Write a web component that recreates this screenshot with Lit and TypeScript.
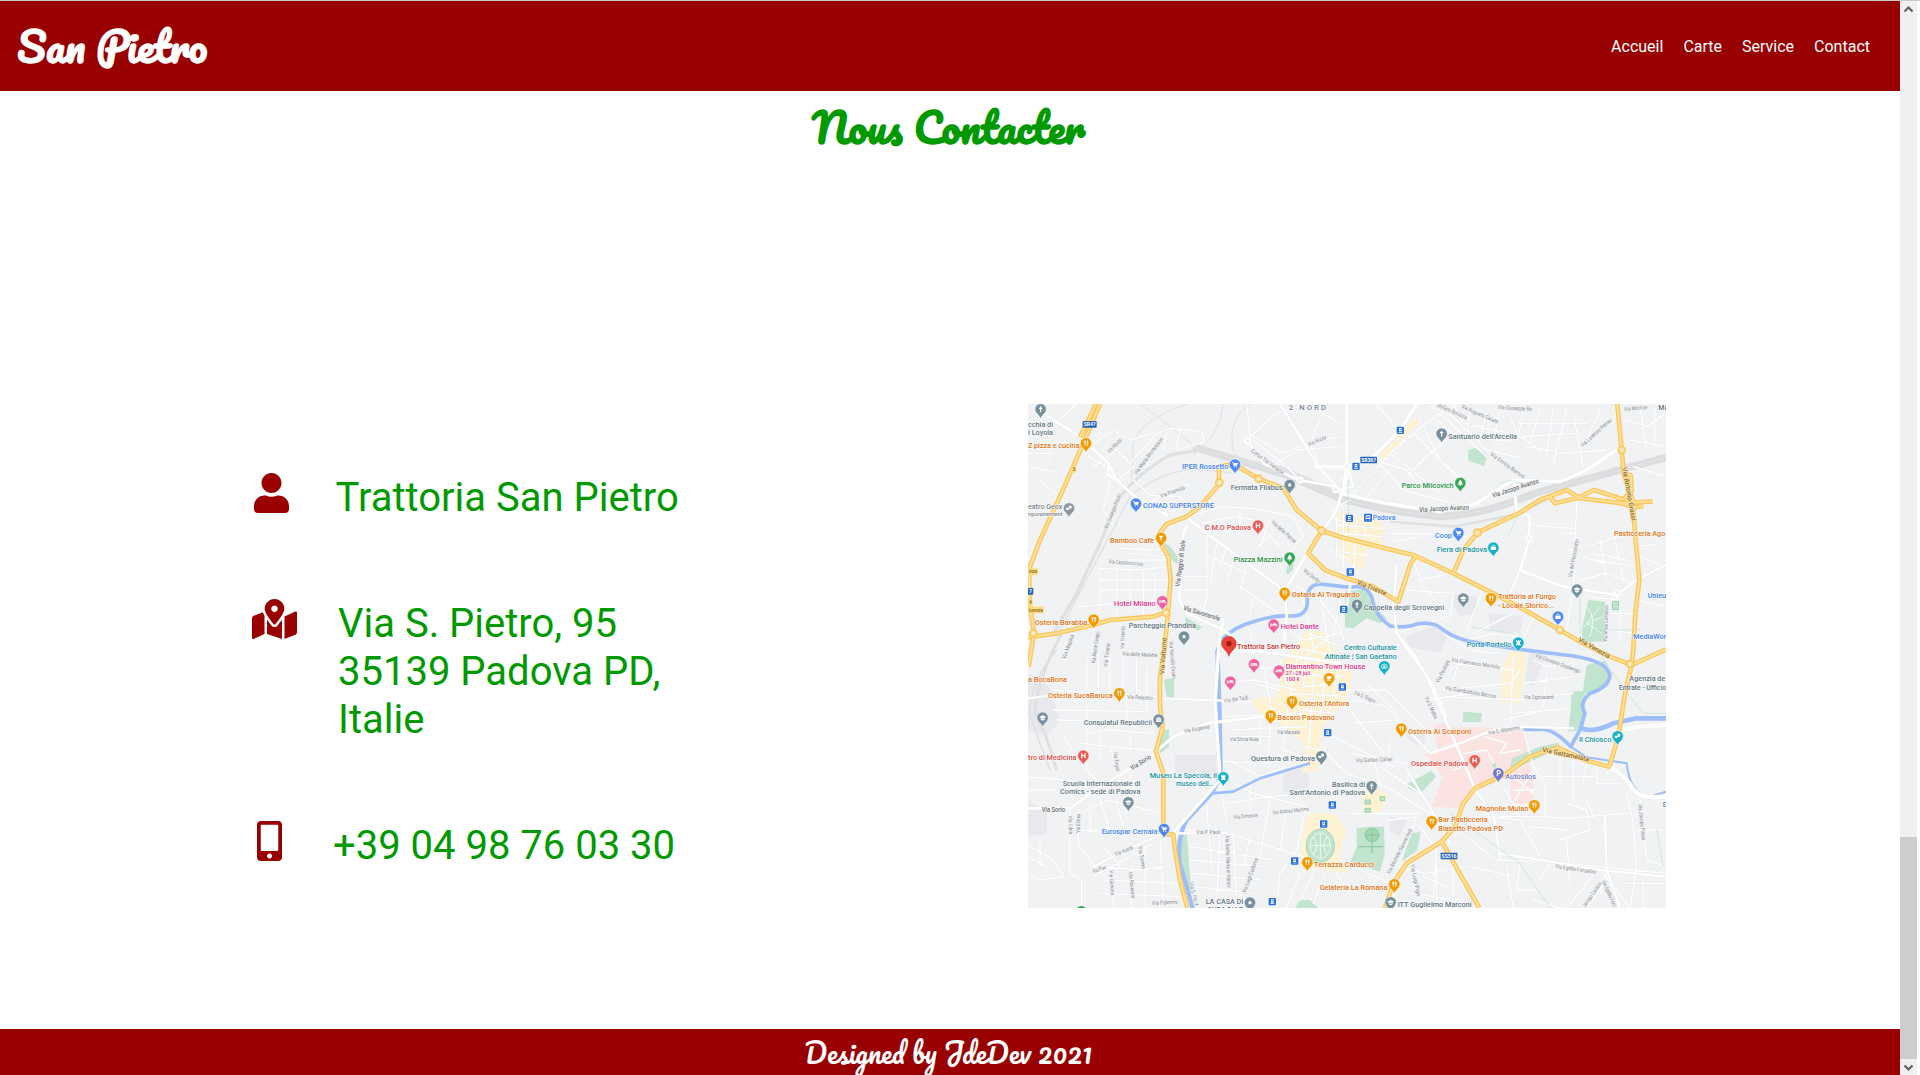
import { LitElement, html, svg, css } from "lit";
import { customElement } from "lit/decorators.js";

/* Map drawing units: three per CSS pixel. */

const ORANGE = "#f29900";
const SLATE = "#78909c";
const BLUE = "#4d86f5";
const PINK = "#f0609e";
const RED = "#ea5a54";
const GREEN = "#34a853";
const TEAL = "#15b0c6";

const ORANGE_T = "#dd7310";
const SLATE_T = "#5f7682";
const BLUE_T = "#3f7ff0";
const PINK_T = "#e0308c";
const RED_T = "#dc4a48";
const GREEN_T = "#25903f";
const TEAL_T = "#16929f";

const parks = [
  "M425,420 L450,440 L474,470 L472,492 L455,480 L440,445 Z",
  "M496,652 L545,680 L535,692 L498,672 Z",
  "M800,500 L822,490 L818,510 L800,525 Z",
  "M1345,150 L1372,142 L1402,165 L1392,198 L1345,182 Z",
  "M975,575 L1030,568 L1055,590 L1060,620 L1100,655 L1080,670 L1040,655 L1000,685 L975,682 Z",
  "M1705,600 L1755,605 L1752,725 L1690,725 L1685,690 Z",
  "M432,840 L462,832 L462,894 L440,890 Z",
  "M425,992 L447,988 L447,1040 L420,1060 L415,1040 Z",
  "M478,1300 L500,1300 L508,1400 L515,1500 L495,1450 Z",
  "M1700,795 L1755,782 L1768,812 L1765,858 L1712,880 L1688,880 Z",
  "M1655,875 L1695,872 L1690,990 L1645,995 L1652,930 Z",
  "M1330,935 L1386,940 L1382,966 L1328,966 Z",
  "M1475,1075 L1560,1040 L1615,1028 L1620,1042 L1500,1100 L1470,1120 Z",
  "M1412,1085 L1430,1090 L1425,1112 Z",
  "M1165,1150 L1235,1112 L1248,1130 L1200,1182 L1165,1165 Z",
  "M1010,1285 L1040,1280 L1092,1280 L1094,1360 L1080,1415 L992,1385 L1010,1340 Z",
  "M1175,1300 L1202,1296 L1192,1350 L1145,1385 Z",
  "M825,1524 L840,1500 L870,1500 L894,1524 Z",
];

const hospital = [
  "M1275,980 L1510,985 L1525,1072 L1435,1145 L1370,1165 L1318,1225 L1236,1220 L1268,1130 L1212,1060 L1255,1055 Z",
  "M1470,1120 L1530,1090 L1545,1210 L1475,1212 Z",
  "M1240,975 L1278,970 L1300,1030 L1255,1055 Z",
];

const sand = [
  "M950,330 L990,345 L1060,350 L1090,380 L1085,430 L1040,450 L1030,510 L960,470 Z",
  "M1080,160 L1130,120 L1145,130 L1090,180 Z",
  "M1125,110 L1190,50 L1200,65 L1140,125 Z",
  "M690,900 L735,890 L770,895 L790,780 L860,690 L920,700 L970,810 L1000,820 L980,900 L905,980 L895,1110 L845,1120 L850,1030 L765,960 L720,945 Z",
  "M1450,790 L1500,720 L1520,755 L1500,910 L1440,905 Z",
  "M850,1280 L870,1240 L940,1240 L980,1290 L955,1370 L985,1420 L840,1400 Z",
  "M1030,1175 L1060,1160 L1105,1185 L1080,1235 L1025,1245 Z",
];

const blocks = [
  "M1290,580 L1370,590 L1370,640 L1315,650 Z",
  "M1405,640 L1510,650 L1500,700 L1410,690 Z",
  "M1155,710 L1240,680 L1285,700 L1260,760 L1170,740 Z",
  "M1530,750 L1580,760 L1540,860 L1515,850 Z",
  "M465,1065 L590,1065 L590,1125 L465,1120 Z",
  "M24,1200 L80,1240 L80,1300 L24,1310 Z",
  "M1160,1000 L1220,990 L1210,1040 L1165,1020 Z",
  "M790,1120 L860,1100 L870,1160 L790,1180 Z",
  "M24,820 L90,860 L120,960 L80,1010 L24,990 Z",
  "M1110,1250 L1160,1260 L1140,1310 L1110,1295 Z",
];

const rails: [string, number][] = [
  ["M520,140 Q650,180 800,225 L960,295 Q1100,335 1260,350 Q1360,345 1450,315 L1560,275 L1938,172", 22],
  ["M620,170 L790,205 L960,280 L1250,338", 8],
  ["M100,700 L170,580 L240,430 L300,290 Q360,215 450,165 L540,150", 9],
  ["M120,690 L220,500 L330,290 Q400,225 520,205 L640,220", 4],
  ["M500,12 Q360,60 340,130 L335,240", 3],
  ["M360,12 Q440,70 540,150", 3],
  ["M610,12 L600,60 Q580,120 520,165", 3],
  ["M690,12 Q620,60 640,150 Q670,230 760,250", 3],
  ["M1110,365 L1300,380 L1480,345 L1580,300", 7],
  ["M130,690 Q50,840 45,940 Q80,1000 110,1110", 8],
  ["M110,750 Q34,840 28,940 L60,1030 L90,1110", 5],
];

const minor =
  "M24,160 H90 V180 M24,200 L100,215 M60,240 L130,300 M130,50 L170,12 M210,60 L240,100 M230,125 L280,90 L330,120 L400,100 " +
  "M205,170 L260,200 M220,200 L290,150 L330,190 L410,100 L455,85 L545,95 L555,125 L470,150 M440,100 L430,150 M480,90 L470,140 " +
  "M270,245 L250,330 L280,380 M300,235 L340,200 M350,330 L420,290 L500,255 M340,240 L390,285 L480,290 " +
  "M510,350 L600,320 L700,325 L820,350 L850,410 L800,470 M545,370 L640,350 L700,360 L780,440 M660,370 V330 M700,450 L760,400 M750,360 L720,440 " +
  "M240,505 L350,510 L445,500 M240,505 V640 M240,540 H440 M240,570 H445 M180,620 L445,600 M290,500 V650 M330,510 V640 M370,520 V640 M405,520 V640 " +
  "M300,445 L420,450 M340,460 L430,470 M320,480 H445 M560,405 V600 L545,640 M500,530 H560 M480,570 H555 M590,430 L570,560 " +
  "M570,470 L680,520 M620,440 L600,500 M640,480 L625,540 M680,500 L660,570 M500,600 L610,660 M660,560 L790,650 M700,590 L690,640 " +
  "M680,12 L690,110 M690,110 L770,40 L860,12 M700,110 L790,160 L860,130 L960,110 M770,190 L830,150 L960,140 M860,12 L960,70 M840,240 L810,210 L700,120 " +
  "M900,60 L870,130 L925,260 M930,330 L990,300 M890,400 L940,350 L990,380 M930,450 L990,480 " +
  "M960,240 L1060,180 L1160,210 L1200,260 M1000,280 L1110,160 L1260,280 M1110,160 L1180,100 L1330,250 M1180,100 L1260,40 L1400,170 " +
  "M1200,60 L1260,180 L1350,260 M1060,170 L1150,270 L1300,310 M1140,100 L1110,60 L1070,12 M1100,220 L1040,290 M1160,230 L1230,160 L1320,90 " +
  "M1230,20 L1300,50 L1400,150 L1510,175 M1300,12 L1330,70 L1470,100 M1350,30 L1345,90 M1400,40 L1380,110 M1440,20 L1420,130 M1250,60 L1310,110 L1480,125 " +
  "M1450,12 L1500,110 L1560,150 M1510,30 L1495,110 M1560,30 L1530,130 M1600,20 L1580,170 M1640,30 L1600,190 M1510,110 L1660,100 M1520,140 L1640,160 L1760,150 " +
  "M1500,70 H1700 M1660,40 L1690,200 M1740,30 L1700,120 M1820,60 L1880,80 L1938,40 M1830,120 L1938,140 M1860,20 L1880,150 M1905,30 V130 M1840,200 L1938,230 " +
  "M1100,400 H1200 L1340,410 M1110,425 L1200,412 M1520,370 L1580,380 L1660,385 M1670,305 L1665,430 L1660,560 L1640,690 M1625,400 H1665 V450 H1640 " +
  "M1700,440 L1830,400 M1720,480 L1850,500 M1740,420 L1760,540 M1780,400 L1810,540 M1680,540 L1760,520 L1840,550 M1750,490 L1690,470 M1720,460 L1820,480 " +
  "M1840,440 L1938,430 M1860,470 L1938,500 M1850,600 L1938,620 M1700,590 L1800,600 L1800,720 M1770,640 H1860 M1760,690 L1850,700 " +
  "M1200,540 L1290,520 M1180,480 L1210,560 L1280,640 M1160,570 L1300,580 L1290,660 M1390,570 L1340,690 M1480,640 L1360,700 M1540,650 L1500,740 M1130,700 L1280,650 " +
  "M830,560 L900,600 L960,680 L980,750 M790,680 L850,720 L960,700 M690,690 L700,750 M850,600 L880,740 M900,580 L930,760 M960,600 L940,700 L840,780 " +
  "M640,750 L900,780 L960,810 M680,810 L790,800 M700,850 L780,870 M780,780 L800,850 M860,770 L850,860 L970,850 M920,780 L900,960 M850,900 L990,920 M610,850 L700,840 L830,870 " +
  "M840,700 L830,780 L815,860 L800,950 M870,700 L960,740 M820,740 L950,770 M815,820 L980,830 M810,880 L980,890 M840,930 L950,940 M950,830 L930,930 M880,830 L870,1000 L855,1110 M850,1040 L900,1050 M855,1075 L895,1080 " +
  "M730,800 L760,950 M610,950 L850,940 M640,990 L720,985 L860,980 M630,1010 H760 M720,960 V1030 M750,960 L745,1090 M800,960 L790,1050 L860,1070 M610,1085 L720,1090 L880,1070 " +
  "M950,350 V470 M970,340 V500 M1010,345 L1000,560 M1040,350 L1030,440 M950,375 L1085,385 M950,400 L1085,410 M960,455 L1040,465 " +
  "M625,1080 L720,1130 L800,1100 M640,1150 L700,1180 L860,1220 M620,1210 L750,1190 L880,1180 M600,1160 L620,1260 M690,1130 V1250 M920,1060 L980,1120 L1100,1160 M940,1010 L1000,1040 L1120,1100 M990,930 L1090,1060 " +
  "M990,970 L1130,960 L1230,1060 M1000,900 L1100,920 L1230,1060 M1040,850 L1130,940 M960,870 L1100,870 L1220,990 M990,1060 L1160,1090 M1060,1070 L1080,1150 M1110,1020 L1100,1110 " +
  "M100,870 L240,880 L415,890 M110,900 L200,905 V1100 M100,930 L380,935 M110,960 L300,965 L410,970 M200,780 V900 M235,760 V880 M270,760 V880 M310,760 V880 M350,780 V880 M380,800 V930 M320,880 V960 " +
  "M210,1000 L260,990 L400,1000 M180,1030 L270,1040 L390,1050 M240,1000 V1080 M270,1040 L290,1110 M330,1000 V1060 M24,1130 L130,1140 L160,1200 M24,1170 H100 " +
  "M130,1010 L190,1100 L260,1170 M180,1240 L260,1200 L430,1240 M210,1210 V1300 M240,1200 L270,1290 M150,1230 V1420 L185,1440 V1524 M175,1240 V1330 L240,1420 M185,1290 L260,1295 M290,1210 L310,1280 " +
  "M30,1340 L100,1380 L130,1430 L60,1440 L24,1420 M24,1370 L80,1400 M60,1320 V1400 M220,1430 L400,1330 M240,1400 L360,1410 L440,1400 M250,1440 L470,1450 M240,1480 L480,1490 M280,1410 V1524 M335,1400 V1524 M375,1340 V1524 M420,1320 L430,1500 M260,1350 L300,1400 " +
  "M500,1290 L620,1300 L850,1370 M510,1340 L760,1380 M510,1380 L730,1400 M520,1420 L720,1440 M520,1460 L700,1480 M560,1220 L575,1400 M600,1300 L590,1500 M640,1300 L650,1500 M690,1310 L670,1400 " +
  "M750,1200 L720,1370 L650,1510 M860,1220 L830,1350 L780,1420 L770,1524 M800,1220 L780,1350 M840,1420 L800,1524 M880,1420 L840,1500 M910,1430 L880,1510 M950,1420 L1000,1500 M1000,1400 L1110,1450 L1130,1524 " +
  "M980,1240 L1200,1240 M1100,1160 L1230,1240 M1080,1100 L1200,1180 M1110,1260 L1190,1250 L1160,1330 M1200,1280 L1250,1350 L1240,1490 M1130,1400 L1220,1420 L1340,1400 M1210,1430 L1280,1460 M1250,1400 V1510 M1300,1350 V1500 M1180,1480 L1300,1500 " +
  "M1270,870 L1470,850 L1500,810 M1280,890 L1490,900 L1660,880 M1300,790 L1480,810 M1320,770 L1300,840 M1480,770 L1470,1000 M1510,850 L1660,830 M1540,780 L1580,800 L1660,790 M1450,960 L1580,930 M1580,830 L1570,920 " +
  "M1270,700 L1350,750 L1430,760 M1340,720 L1420,700 L1490,710 M1480,940 L1650,925 M1510,985 L1540,1100 L1575,1150 V1250 M1580,1060 L1700,1080 M1620,1060 V1160 M1570,1130 H1720 M1660,1080 V1200 M1700,1090 L1690,1150 " +
  "M1575,1250 L1640,1255 L1820,1240 M1440,1250 L1575,1250 M1450,1160 L1500,1250 M1400,1250 L1500,1260 L1560,1370 M1310,1290 L1430,1380 L1580,1385 L1740,1400 L1938,1420 M1530,1280 L1640,1290 M1640,1210 L1700,1230 L1710,1290 L1620,1320 " +
  "M1700,1200 L1720,1250 M1760,1120 L1830,1090 M1730,1090 V1150 H1800 M1820,1180 L1838,1260 L1850,1400 L1830,1524 M1860,1200 L1880,1380 L1938,1400 M1850,1290 H1938 M1750,1260 L1760,1410 L1740,1480 M1590,1390 L1560,1440 M1640,1320 L1650,1450 " +
  "M1500,1390 L1490,1470 L1540,1470 M1740,1400 L1640,1524 M1770,1420 L1700,1524 M1750,1420 L1830,1524 M1460,1400 L1480,1524 M1350,1400 L1480,1430 M1540,1500 L1620,1524 M1870,1440 V1524 M1820,1450 H1930";

const major: [string, number][] = [
  ["M70,40 L180,110 L265,190 L290,240 L345,290 L440,345 M265,190 V225 L300,245", 8],
  ["M500,352 L560,400 L790,570 M500,380 L490,400 L478,600 L500,640 L610,690 L700,755", 8],
  ["M795,570 L865,455 L905,395 L945,340 L980,240 V12 M795,580 L800,650 L790,750", 8],
  ["M610,660 L598,720 L588,860 L585,910 L598,1100 L600,1140 L460,1298", 9],
  ["M640,740 L690,750 L960,790", 8],
  ["M780,12 L895,200 L960,270 M980,195 L1000,260 L960,270 M680,120 L730,190 L835,240 L950,260", 7],
  ["M960,280 L1100,310 L1260,335 L1370,310 L1480,240 L1620,245 L1700,210 L1790,150 L1805,150", 10],
  ["M980,200 L1060,170 L1140,90 L1190,12 M980,190 L970,280 M890,200 L980,200", 11],
  ["M1480,240 L1490,330 L1530,350 L1525,430 L1500,510 L1630,560 L1790,585 L1850,540", 8],
  ["M1500,510 L1470,580 M1850,540 L1938,495 M1790,590 L1805,650", 6],
  ["M1130,500 L1120,610 L1130,700 L1220,830 L1320,1060 L1370,1180 M1000,500 L980,620", 7],
  ["M1130,700 L1180,760 L1240,860 L1280,950 M1220,900 L1360,880", 6],
  ["M1230,1060 L1320,1030 L1420,990 L1510,980 L1660,985", 7],
  ["M24,1225 L150,1225 L240,1160 L390,1070 L460,1010 L560,970 L730,950", 8],
  ["M24,895 L110,885 M415,895 L690,905", 6],
  ["M220,1400 L340,1340 L430,1300 L620,1300", 6],
  ["M1768,1100 Q1820,1130 1840,1170 Q1870,1200 1938,1190 M1800,990 L1860,980 L1938,975", 13],
  ["M1360,1165 L1420,1240 L1440,1370 M1160,1110 L1240,1240 L1290,1330", 6],
  ["M1438,1360 L1590,1385 L1740,1410 L1938,1430 M1755,1250 L1760,1410 L1800,1524", 7],
  ["M1395,1010 L1460,1030 L1440,1060 L1500,1050 M1330,1060 L1400,1050 L1420,1090 M1300,1110 L1360,1090 M1480,1130 L1540,1180 M1540,1110 L1485,1200 M1480,1170 H1545", 4],
];

const yellow = [
  "M240,12 L190,130 L120,290 L60,420 L28,505 V600 L42,700 L26,800",
  "M180,112 L205,60 L228,12",
  "M24,712 L110,700 L220,675 L270,660 L400,650 L440,636",
  "M500,350 L440,372 L418,400 L422,430 L445,470 L452,540 L444,640 L432,760 L420,830 V920 L428,980 L408,1055 L430,1120 V1300 L460,1304 L465,1350 L480,1440 L502,1524",
  "M500,350 L540,320 L598,252 L596,200 L640,192 L716,236 L790,265 L830,330 L905,392 L865,460 L915,510 L980,535 L1060,560 L1135,605 L1172,490 L1186,470",
  "M905,392 L960,410 L1095,445 L1180,465 L1300,520 L1420,580 L1510,628 L1620,690 L1680,725 L1770,770 L1835,795",
  "M1300,520 L1330,450 L1372,398 L1500,338 L1560,300 L1640,270 L1675,292 L1722,270 L1810,298 L1835,272 L1832,225 L1812,225",
  "M1590,290 L1605,310 L1672,294 L1810,310 L1898,304 M1800,310 L1845,322 L1870,318",
  "M1792,12 L1805,150 L1812,225 L1838,300 L1845,400 L1858,540 L1846,640 L1840,750 L1835,795 L1815,880 L1795,1010 L1768,1100 L1700,1082 L1612,1042 L1530,1070 L1460,1120 L1365,1165 L1330,1210 L1305,1280 L1265,1325 L1160,1390 L1120,1450 L1095,1524",
  "M1265,1325 L1378,1524",
  "M1835,795 L1938,748",
];

const rivers: [string, number][] = [
  ["M592,750 L606,720 Q640,680 700,665 Q760,645 810,648 Q865,650 862,600 Q860,555 900,552 L990,562 Q1050,550 1060,610 Q1070,650 1110,678 Q1160,685 1190,672 Q1240,662 1270,690 Q1310,720 1380,730 L1500,748 L1660,768 Q1768,785 1770,830 Q1760,865 1710,880 Q1675,910 1695,940 L1680,990 L1652,1040 Q1600,985 1560,988 H1510", 11],
  ["M592,750 L598,910 L602,1130 L575,1180 L500,1260 Q470,1310 480,1390 L518,1524", 13],
  ["M575,1180 L640,1175 L720,1135 L820,1105 L870,1090", 8],
  ["M1685,985 Q1720,1000 1780,970 L1850,955 L1938,955", 14],
  ["M1652,1040 L1700,1072 L1820,1090 Q1830,1185 1890,1190 L1938,1175", 6],
];

const dashed =
  "M1500,335 L1465,405 M1680,590 V700 M1720,690 H1860 M1745,770 L1800,850 L1870,940 L1938,940 M1500,1390 L1590,1524 M1290,1240 L1500,1390 M985,240 V400 M1910,1290 L1930,1400 M1355,680 L1400,690 L1480,700 M1440,250 Q1480,230 1520,260";

type Pin = [number, number, string, string];
const pins: Pin[] = [
  [62, 28, SLATE, "cross"], [198, 130, ORANGE, "fork"], [645, 194, BLUE, "cart"], [809, 255, SLATE, "dot"],
  [348, 311, BLUE, "cart"], [147, 325, "#8f979e", "mask"], [423, 414, ORANGE, "glass"], [714, 377, RED, "h"],
  [809, 473, GREEN, "tree"], [794, 579, ORANGE, "fork"], [427, 604, PINK, "bed"], [221, 659, ORANGE, "fork"],
  [492, 710, SLATE, "dot"], [761, 674, PINK, "bed"],
  [1265, 101, SLATE, "cross"], [1321, 249, GREEN, "tree"], [1315, 399, BLUE, "cart"], [1420, 443, TEAL, "bag"],
  [1330, 596, SLATE, "cap"], [1413, 595, ORANGE, "fork"], [1671, 569, SLATE, "cap"], [1614, 650, BLUE, "bag"],
  [1011, 615, SLATE, "cross"], [1495, 728, TEAL, "tower"],
  [702, 793, PINK, "bed"], [631, 845, PINK, "bed"], [777, 812, PINK, "bed"], [927, 835, ORANGE, "cup"],
  [298, 880, ORANGE, "fork"], [816, 904, ORANGE, "fork"], [752, 947, ORANGE, "fork"], [68, 953, SLATE, "cap"],
  [416, 959, SLATE, "case"], [190, 1067, RED, "h"], [904, 1069, SLATE, "mask"], [610, 1132, TEAL, "tower"],
  [325, 1207, SLATE, "cap"], [432, 1287, BLUE, "cart"], [862, 1387, ORANGE, "fork"], [690, 1508, SLATE, "dot"],
  [1093, 799, TEAL, "camera"], [1144, 986, ORANGE, "fork"], [1364, 1081, RED, "h"], [1435, 1120, "#7278d0", "p"],
  [1793, 1009, TEAL, "mask"], [1055, 1159, SLATE, "cross"], [1543, 1216, ORANGE, "fork"], [1235, 1264, ORANGE, "fork"],
  [1123, 1453, ORANGE, "fork"], [1112, 1507, SLATE, "cap"], [184, 1534, GREEN, "dot"],
];

/* x, baseline, width, colour, text, size */
type Label = [number, number, number, string, string, number?];
const labels: Label[] = [
  [24, 80, 75, SLATE_T, "cchia di"], [24, 105, 75, SLATE_T, "i Loyola"], [24, 144, 154, ORANGE_T, "Z pizza e cucina"],
  [486, 207, 139, BLUE_T, "IPER Rossetto"], [632, 270, 156, SLATE_T, "Fermata Flixbus"],
  [24, 328, 103, "#7c868c", "eatro Geox"], [24, 347, 103, "#7c868c", "nporairement", 18], [369, 325, 213, BLUE_T, "CONAD SUPERSTORE"],
  [554, 391, 139, RED_T, "C.M.O Padova"], [270, 429, 132, ORANGE_T, "Bamboo Cafè"], [641, 487, 146, GREEN_T, "Piazza Mazzini"],
  [815, 592, 204, ORANGE_T, "Ostaria Al Traguardo"], [282, 619, 125, PINK_T, "Hotel Milano"], [44, 674, 158, ORANGE_T, "Osteria Barabba"],
  [326, 685, 202, SLATE_T, "Parcheggio Prandina"], [782, 686, 115, PINK_T, "Hotel Dante"], [651, 746, 189, "#c5352f", "Trattoria San Pietro"],
  [1285, 116, 206, SLATE_T, "Santuario dell'Arcella"], [1145, 264, 156, GREEN_T, "Parco Milcovich"], [1058, 361, 68, BLUE_T, "Padova"],
  [1244, 413, 52, BLUE_T, "Coop"], [1250, 457, 151, TEAL_T, "Fiera di Padova"], [1782, 409, 154, ORANGE_T, "Pasticceria Ago"],
  [1434, 598, 174, ORANGE_T, "Trattoria al Fungo"], [1434, 623, 168, ORANGE_T, "- Locale Storico..."], [1883, 595, 55, BLUE_T, "Unieu"],
  [1031, 630, 241, SLATE_T, "Cappella degli Scrovegni"], [1840, 718, 98, BLUE_T, "MediaWor"], [1340, 741, 134, TEAL_T, "Porta Portello"],
  [972, 751, 158, TEAL_T, "Centro Culturale"], [914, 776, 216, TEAL_T, "Altinate | San Gaetano"], [1915, 30, 30, SLATE_T, "Ma"],
  [797, 807, 239, PINK_T, "Diamantino Town House"], [797, 826, 78, PINK_T, "27–28 juil.", 18], [797, 844, 42, PINK_T, "100 €", 17],
  [24, 845, 117, ORANGE_T, "a BocaBona"], [84, 894, 194, ORANGE_T, "Osteria SucaBaruca"], [191, 974, 205, SLATE_T, "Consulatul Republicii"],
  [837, 918, 151, ORANGE_T, "Osteria l'Anfora"], [772, 961, 172, ORANGE_T, "Bacaro Padovano"], [24, 1081, 145, RED_T, "tro di Medicina"],
  [693, 1083, 192, SLATE_T, "Questura di Padova"], [389, 1134, 202, TEAL_T, "Museo La Specola, il"], [468, 1159, 112, TEAL_T, "museo dell…"],
  [128, 1158, 233, SLATE_T, "Scuola Internazionale di"], [120, 1183, 241, SLATE_T, "Comics - sede di Padova"],
  [936, 1161, 99, SLATE_T, "Basilica di"], [808, 1186, 227, SLATE_T, "Sant'Antonio di Padova"], [245, 1303, 167, BLUE_T, "Eurospar Cernaia"],
  [882, 1402, 180, ORANGE_T, "Terrazza Carducci"], [899, 1469, 203, ORANGE_T, "Gelateria La Romana"], [557, 1512, 113, SLATE_T, "LA CASA DI"], [562, 1535, 106, SLATE_T, "CURA DIAZ"],
  [1164, 1001, 189, ORANGE_T, "Osteria Ai Scarponi"], [1828, 844, 108, SLATE_T, "Agenzia de"], [1797, 869, 141, SLATE_T, "Entrate - Ufficio"],
  [1677, 1025, 97, TEAL_T, "Il Chiosco"], [1173, 1097, 172, RED_T, "Ospedale Padova"], [1456, 1137, 92, "#7278cb", "Autosilos"],
  [1367, 1232, 158, ORANGE_T, "Magnolie Mulan"], [1255, 1267, 148, ORANGE_T, "Bar Pasticceria"], [1255, 1292, 194, ORANGE_T, "Biasetto Padova PD"],
  [1133, 1522, 222, SLATE_T, "ITT Guglielmo Marconi"], [1929, 1220, 9, SLATE_T, "E"],
];

/* centre x, centre y, angle, width, text, bold */
type Street = [number, number, number, number, string, boolean?];
const streets: Street[] = [
  [283, 137, -45, 55, "Via Monta"], [385, 168, -53, 135, "Via Maria Montessori"], [457, 275, -20, 78, "Via Pramida"],
  [278, 332, -68, 112, "Via Giuseppe Paolin"], [743, 185, 36, 118, "Corso Tre Venezie"], [891, 122, -23, 58, "Via Nizza"],
  [318, 488, 5, 104, "Via Castelmorrone"], [482, 490, -83, 140, "Via Raggio di Sole", true], [792, 395, 42, 95, "Via delle Palme"],
  [876, 528, 38, 62, "Via Giotto"], [545, 640, 17, 114, "Via Savonarola", true], [144, 740, -70, 76, "Via Mapina"],
  [226, 742, -82, 96, "Via Monte Cengio"], [260, 765, -83, 72, "Via Tirana"], [307, 712, -88, 68, "Via Vicenza"],
  [359, 763, 3, 106, "Via delle Melette"], [430, 768, -86, 110, "Via Volturno", true], [458, 780, 85, 112, "Via Niccolò Orsini"],
  [1296, 33, 24, 96, "Stefano Bonazza"], [1380, 42, 24, 120, "Via Augusto Caratti"], [1485, 24, 3, 102, "Via Giuseppe Ba"],
  [1463, 196, 36, 125, "Via Enrico Bernini"], [1728, 98, -42, 120, "Via Lorenzo Perosi"], [1847, 24, -5, 70, "Via Mortise"],
  [1486, 265, -18, 145, "Via Jacopo Avanzo", true], [1272, 326, -3, 150, "Via Jacopo Avanzo", true], [1827, 282, 80, 162, "Via Antonio Grassi", true],
  [1660, 475, -80, 116, "Via del Pescarotto"], [1055, 564, 22, 94, "Via Trieste", true], [1722, 744, 30, 106, "Via Venezia", true],
  [1757, 670, -88, 110, "Via Attilia Lambroni"], [360, 892, 3, 78, "Via Palestro"], [648, 897, -8, 74, "Via dei Tadi"],
  [530, 986, -10, 78, "Via Euganea"], [673, 1017, 0, 86, "Via Silvca Rosa"], [805, 996, 0, 68, "Via Marsala"],
  [290, 1085, 82, 58, "Via Tirgoli"], [362, 1088, -32, 68, "Via Sorio", true], [100, 1231, 0, 70, "Via Sorio", true],
  [152, 1275, 88, 56, "Via Libia"], [174, 1270, -88, 58, "Via Eritrea"], [677, 1248, -5, 72, "Via Dimesse"],
  [812, 1232, -6, 110, "Via Andrea Memmo"], [565, 1296, 0, 72, "Via P. Paoli"], [311, 1352, -22, 58, "Via Aosta"],
  [238, 1407, -20, 42, "Via Pisa"], [366, 1373, 80, 68, "Via Torino"], [276, 1448, 86, 74, "Via Genova"],
  [336, 1455, 84, 80, "Via Ravenna"], [435, 1507, -3, 78, "Via Palermo"], [625, 1385, 88, 156, "Via Santa Maria in Vanzo"],
  [690, 1426, -70, 112, "Via Luigi Cadorna"], [522, 1482, 76, 72, "Via S. Pio X"], [1367, 790, 9, 146, "Via Francesco Marzolo"],
  [1352, 876, 10, 156, "Via Giambattista Belzoni"], [1557, 890, 0, 90, "Via Ognissanti"], [1614, 790, 20, 142, "Via Giovanni Gradenigo"],
  [1268, 814, -62, 74, "Via Paolotti"], [1234, 923, 65, 70, "Via S. Mattia"], [1035, 890, 24, 68, "Via S. Biagio"],
  [1062, 1079, -2, 110, "Via Galileo Galilei"], [1452, 990, -10, 96, "Via S. Massimo"], [1637, 1064, 12, 142, "Via Gattamelata", true],
  [1138, 1354, -63, 150, "Via Michele Sanmicheli"], [1187, 1440, 78, 96, "Via Luigi Piga"], [1866, 1266, 84, 108, "Via Jacopo Filiasi"],
  [1667, 1407, 9, 124, "Via Egidio Forcellini"], [1716, 1483, -55, 88, "Jacopo Cavacio"], [1768, 1480, 66, 86, "Via Egidio Forc"],
];

const transit: [number, number][] = [
  [988, 355], [991, 516], [971, 628], [1141, 91], [1008, 199], [967, 861], [923, 998], [937, 1215], [911, 1272], [824, 1383], [757, 1505],
];

const shields: [number, number, number, string][] = [[209, 73, 42, "SR47"], [1046, 180, 50, "SR307"], [1287, 1368, 50, "SS516"], [31, 574, 18, "7"]];
const tags: [number, number, number, string][] = [[162, 207, 14, "3"], [39, 515, 30, "nza"], [47, 630, 46, "icenza"], [31, 608, 14, "4"]];

const glyph = (kind: string) => {
  switch (kind) {
    case "fork":
      return svg`<path class="line" d="M-5,-8 V-3 Q-5,0 -3,0 Q-1,0 -1,-3 V-8 M-3,-8 V8 M4,8 V-8 Q7,-5 6,1 H4"/>`;
    case "cart":
      return svg`<path class="line" d="M-9,-7 H-6 L-3,3 H5 L8,-4 H-5"/><path class="dot" d="M-5,-4 H8 L5,3 H-3Z"/><circle class="dot" cx="-2" cy="7" r="1.8"/><circle class="dot" cx="5" cy="7" r="1.8"/>`;
    case "bed":
      return svg`<path class="line" d="M-9,-5 V6 M9,6 V0 M-9,3 H9"/><path class="dot" d="M-2,-4 H6 Q9,-4 9,1 H-2Z"/><circle class="dot" cx="-5" cy="-1" r="2"/>`;
    case "cross":
      return svg`<path class="line thick" d="M0,-9 V9 M-5,-3 H5"/>`;
    case "h":
      return svg`<path class="line thick" d="M-5,-8 V8 M5,-8 V8 M-5,0 H5"/>`;
    case "p":
      return svg`<path class="line thick" d="M-3,9 V-8 H1 Q6,-7 6,-3.5 Q6,1 1,1 H-3"/>`;
    case "tree":
      return svg`<path class="dot" d="M0,-10 L6,-2 H4 L8,5 H-8 L-4,-2 H-6Z M-1.5,5 H1.5 V9 H-1.5Z"/>`;
    case "glass":
      return svg`<path class="dot" d="M-7,-7 H7 L1.5,0 V5 H5 V7 H-5 V5 H-1.5 V0Z"/>`;
    case "cap":
      return svg`<path class="dot" d="M0,-7 L11,-2 L0,3 L-11,-2Z M-6,2 L0,5 L6,2 V6 L0,9 L-6,6Z"/>`;
    case "cup":
      return svg`<path class="dot" d="M-7,-6 H8 V0 H5 Q4,4 1,4 H-3 Q-7,4 -7,0Z M-7,6 H6 V8 H-7Z"/>`;
    case "bag":
      return svg`<path class="dot" d="M-8,-3 H8 V7 H-8Z"/><path class="line" d="M-4,-3 Q-4,-8 0,-8 Q4,-8 4,-3"/>`;
    case "case":
      return svg`<path class="dot" d="M-8,-4 H8 V0 H-8Z M-8,2 H8 V7 H-8Z"/><path class="line" d="M-3,-4 V-7 H3 V-4"/>`;
    case "camera":
      return svg`<path class="line" d="M-8,-4 H-4 L-2,-7 H2 L4,-4 H8 V6 H-8Z"/><circle class="dot" cy="1" r="3.5"/>`;
    case "tower":
      return svg`<path class="dot" d="M-7,-8 H-4 V-5 H-1.5 V-8 H1.5 V-5 H4 V-8 H7 V-2 H5 V4 H7 V8 H-7 V4 H-5 V-2 H-7Z"/>`;
    case "mask":
      return svg`<path class="dot" d="M-9,-2 H0 V3 Q-4,9 -9,3Z M-1,-8 H8 V-2 Q4,4 1,1 V-4 H-1Z"/>`;
    default:
      return svg`<circle class="dot" r="5"/>`;
  }
};

@customElement("city-map")
class CityMap extends LitElement {
  static styles = css`
    :host { display: block; }
    .map { display: block; width: 638px; height: 504px; font-family: Roboto, sans-serif; }
    .ground { fill: #f0f2f4; }
    .park { fill: #c0e4cd; }
    .hospital { fill: #fbe3e2; }
    .sand { fill: #fdf3d3; }
    .block { fill: #e7e9ec; }
    .rail { fill: none; stroke: #dcdddf; stroke-linejoin: round; }
    .railline { fill: none; stroke: #e9eaec; stroke-width: 1.5; }
    .road { fill: none; stroke: #fff; stroke-linejoin: round; stroke-linecap: round; }
    .casing { fill: none; stroke: #e5e7ea; stroke-linejoin: round; }
    .river { fill: none; stroke: #9dbef9; stroke-linejoin: round; }
    .artery { fill: none; stroke: #fac758; stroke-width: 14; stroke-linejoin: round; }
    .core { fill: none; stroke: #ffe09a; stroke-width: 6; stroke-linejoin: round; }
    .trail { fill: none; stroke: #a5d9b5; stroke-width: 2; stroke-dasharray: 5 3; }
    .line { fill: none; stroke: #fff; stroke-width: 2.2; stroke-linejoin: round; }
    .thick { stroke-width: 3.4; }
    .dot { fill: #fff; }
    .label { font-weight: 500; stroke: #fff; stroke-width: 3.5; stroke-opacity: 0.8; paint-order: stroke; stroke-linejoin: round; }
    .district { font-size: 23px; font-weight: 500; fill: #74809a; stroke: #fff; stroke-width: 3; paint-order: stroke; }
    .street { font-size: 17px; fill: #85898d; text-anchor: middle; stroke: #f6f7f8; stroke-width: 3; paint-order: stroke; }
    .bold { font-size: 20px; fill: #6b6e70; font-weight: 500; }
    .amber { fill: #85662a; stroke: #ffe6ac; }
    .shieldtext { font-size: 15px; font-weight: 700; fill: #fff; text-anchor: middle; }
    .tagtext { font-size: 15px; font-weight: 500; fill: #8a6a18; text-anchor: middle; }
  `;

  render() {
    const amber = ["Via Trieste", "Via Venezia", "Via Volturno", "Via Antonio Grassi", "Via Gattamelata"];
    return html`<svg class="map" viewBox="24 12 1914 1512" preserveAspectRatio="none">
      <rect class="ground" x="24" y="12" width="1914" height="1512" />
      ${blocks.map((d) => svg`<path class="block" d=${d}/>`)}
      ${sand.map((d) => svg`<path class="sand" d=${d}/>`)}
      ${hospital.map((d) => svg`<path class="hospital" d=${d}/>`)}
      ${parks.map((d) => svg`<path class="park" d=${d}/>`)}
      ${rails.map(([d, w]) => svg`<path class="rail" d=${d} stroke-width=${w}/><path class="railline" d=${d}/>`)}
      <path class="casing" stroke-width="5.5" d=${minor} />
      <path class="road" stroke-width="4" d=${minor} />
      ${rivers.map(([d, w]) => svg`<path class="river" d=${d} stroke-width=${w}/>`)}
      ${major.map(([d, w]) => svg`<path class="casing" d=${d} stroke-width=${w + 2}/>`)}
      ${major.map(([d, w]) => svg`<path class="road" d=${d} stroke-width=${w}/>`)}
      <path class="trail" d=${dashed} />
      <ellipse cx="901" cy="1337" rx="42" ry="50" fill="#c0e4cd" stroke="#a6d4b4" stroke-width="3" />
      <ellipse cx="901" cy="1337" rx="30" ry="38" fill="none" stroke="#eef8f0" stroke-width="3" />
      <path class="line" d="M901,1300 V1375 M872,1337 H930 M880,1310 Q901,1337 880,1364 M922,1310 Q901,1337 922,1364" />
      <circle cx="1056" cy="1305" r="20" fill="#a3d6b4" stroke="#8fcca3" stroke-width="4" />
      <path d="M1056,1285 V1360 M1036,1305 H1080 M1015,1340 H1090" fill="none" stroke="#8fcca3" stroke-width="4" />
      <path class="line" d="M1700,620 Q1730,650 1710,710 M1740,620 L1700,670 L1745,700 M1690,680 Q1720,660 1750,650" />
      <path d="M1035,1200 h16 v12 h-16z M1080,1190 h14 v12 h-14z M1035,1225 h16 v12 h-16z M1778,605 h18 v24 h-18z" fill="#c0e4cd" stroke="#93d0a6" stroke-width="3" />
      ${yellow.map((d) => svg`<path class="artery" d=${d}/>`)}
      ${yellow.map((d) => svg`<path class="core" d=${d}/>`)}
      ${[[598, 248], [716, 236], [905, 392], [438, 638], [1805, 150], [1372, 398], [1620, 690], [40, 700], [1830, 792]].map(
        ([x, y]) => svg`<circle cx=${x} cy=${y} r="11" fill="#ffe09a" stroke="#fac355" stroke-width="4"/><circle class="dot" cx=${x} cy=${y} r="3"/>`
      )}
      ${[[980, 200], [683, 122], [840, 240], [947, 269], [1527, 415], [1793, 578]].map(
        ([x, y]) => svg`<circle cx=${x} cy=${y} r="8" fill="#eceef0" stroke="#fff" stroke-width="5"/>`
      )}
      ${streets.map(
        ([x, y, a, w, t, b]) => svg`<text class="street ${b ? "bold" : ""} ${amber.includes(t) ? "amber" : ""}"
          transform="translate(${x} ${y}) rotate(${a})" dy="6" textLength=${w} lengthAdjust="spacingAndGlyphs">${t}</text>`
      )}
      ${tags.map(([x, y, w, t]) => svg`<rect x=${x - w / 2} y=${y - 10} width=${w} height="20" fill="#fdda7b"/><text class="tagtext" x=${x} y=${y + 5}>${t}</text>`)}
      ${shields.map(([x, y, w, t]) => svg`<rect x=${x - w / 2} y=${y - 10} width=${w} height="20" rx="2" fill="#2664b4"/><text class="shieldtext" x=${x} y=${y + 6}>${t}</text>`)}
      ${transit.map(
        ([x, y]) => svg`<g transform="translate(${x} ${y})"><rect x="-11" y="-11" width="22" height="22" rx="3" fill="#2a6fe0"/><path class="dot" d="M-4,-7 H4 V3 H-4Z M-6,5 H6 V7 H-6Z"/><path d="M-2,-4 H2 V-1 H-2Z" fill="#2a6fe0"/></g>`
      )}
      <g transform="translate(1044 353)"><rect x="-12" y="-12" width="24" height="24" rx="3" fill="#2a6fe0" /><path class="dot" d="M-7,-7 H7 V4 H-7Z M-7,6 H-3 V8 H-7Z M3,6 H7 V8 H3Z" /><path d="M-5,-4 H5 V0 H-5Z" fill="#2a6fe0" /></g>
      ${pins.map(
        ([x, y, c, k]) => svg`<g transform="translate(${x} ${y})">
          <path d="M0,28 C-3,17 -17,12 -17,0 A17,17 0 0 1 17,0 C17,12 3,17 0,28Z" fill=${c} stroke="#fff" stroke-width="1.5"/>${glyph(k)}</g>`
      )}
      <path d="M627,769 C623,752 605,747 605,731 A22,22 0 0 1 649,731 C649,747 631,752 627,769Z" fill="#ea4335" stroke="#c5332a" stroke-width="1.5" />
      <circle cx="627" cy="731" r="8" fill="#9e1b16" />
      <text class="district" x="806" y="31" textLength="112" lengthAdjust="spacing">2 NORD</text>
      ${labels.map(
        ([x, y, w, c, t, s]) => svg`<text class="label" x=${x} y=${y} font-size=${s ?? 24} fill=${c} textLength=${w} lengthAdjust="spacingAndGlyphs">${t}</text>`
      )}
    </svg>`;
  }
}

const icons = {
  user: {
    box: "0 0 448 512",
    d: "M224 256c70.7 0 128-57.3 128-128S294.7 0 224 0 96 57.3 96 128s57.3 128 128 128zm89.6 32h-16.7c-22.2 10.2-46.9 16-72.9 16s-50.6-5.8-72.9-16h-16.7C60.2 288 0 348.2 0 422.4V464c0 26.5 21.5 48 48 48h352c26.5 0 48-21.5 48-48v-41.6c0-74.2-60.2-134.4-134.4-134.4z",
  },
  map: {
    box: "0 0 576 512",
    d: "M288 0c-69.59 0-126 56.41-126 126 0 56.26 82.35 158.8 113.9 196.02 6.39 7.54 17.82 7.54 24.2 0C331.65 284.8 414 182.26 414 126 414 56.41 357.59 0 288 0zm0 168c-23.2 0-42-18.8-42-42s18.8-42 42-42 42 18.8 42 42-18.8 42-42 42zM20.12 215.95A32.006 32.006 0 0 0 0 245.66v250.32c0 11.32 11.43 19.06 21.94 14.86L160 448V214.92c-8.84-15.98-16.07-31.54-21.25-46.42L20.12 215.95zM288 359.67c-14.07 0-27.38-6.18-36.51-16.96-19.66-23.2-40.57-49.62-59.49-76.72v182l192 64V266c-18.92 27.09-39.82 53.52-59.49 76.72-9.13 10.77-22.44 16.95-36.51 16.95zm266.06-198.51L416 224v288l139.88-55.95A31.996 31.996 0 0 0 576 426.34V176.02c0-11.32-11.43-19.06-21.94-14.86z",
  },
  phone: {
    box: "0 0 320 512",
    d: "M272 0H48C21.5 0 0 21.5 0 48v416c0 26.5 21.5 48 48 48h224c26.5 0 48-21.5 48-48V48c0-26.5-21.5-48-48-48zM160 480c-17.7 0-32-14.3-32-32s14.3-32 32-32 32 14.3 32 32-14.3 32-32 32zm112-108c0 6.6-5.4 12-12 12H60c-6.6 0-12-5.4-12-12V60c0-6.6 5.4-12 12-12h200c6.6 0 12 5.4 12 12v312z",
  },
};

const icon = (i: { box: string; d: string }) => html`<svg class="icon" viewBox=${i.box}><path d=${i.d} /></svg>`;

@customElement("app-root")
class AppRoot extends LitElement {
  static styles = css`
    :host { display: block; font-family: Roboto, sans-serif; }
    .window { display: flex; height: 1075px; width: 1920px; box-sizing: border-box; padding-right: 3px; border-top: 1px solid #c8c8c8; background: #fff; overflow: hidden; }
    .page { display: flex; flex-direction: column; width: 1900px; height: 1074px; }
    .header { display: flex; flex: none; justify-content: space-between; align-items: center; height: 90px; box-sizing: border-box; padding: 0 30px 0 17px; background: #900; color: #fff; }
    .script { margin: 0; font-family: Pacifico, cursive; font-size: 41.4px; line-height: 70px; font-weight: 700; }
    .brand { padding-bottom: 1px; }
    .nav { display: flex; gap: 20px; padding-top: 2px; font-size: 16px; line-height: 20px; }
    .heading { flex: none; height: 70px; padding: 1px 3px 0 0; box-sizing: border-box; text-align: center; color: #090; }
    .main { display: flex; flex: 1; align-items: flex-start; }
    .contacts { display: flex; flex-direction: column; gap: 78px; width: 776px; padding: 312px 0 0 252px; }
    .row { display: grid; grid-template-columns: 45px 1fr; height: 48px; font-size: 40px; line-height: 48px; color: #090; }
    .address { height: 144px; }
    .icon { height: 40px; fill: #900; display: block; }
    .value { padding-top: 1px; }
    .name .icon { margin-left: 2px; }
    .phone .icon { margin-left: 5px; }
    .name .value { padding-left: 38.5px; }
    .address .value { padding-left: 41px; }
    .phone .value { padding-left: 36px; }
    .place { padding-top: 243px; }
    .footer { flex: none; height: 46px; box-sizing: border-box; padding-right: 3px; background: #900; color: #fff; text-align: center; }
    .credit { font-size: 26.8px; line-height: 47px; font-weight: 400; }
    .scrollbar { display: flex; flex-direction: column; width: 17px; height: 1074px; background: #f0f0f0; }
    .arrow { display: block; width: 17px; height: 16px; fill: none; stroke: #606060; stroke-width: 2.2; }
    .track { flex: 1; }
    .thumb { height: 222px; background: #cdcdcd; }
  `;

  render() {
    return html`<div class="window">
      <div class="page">
        <header class="header">
          <h1 class="script brand">San Pietro</h1>
          <nav class="nav">${["Accueil", "Carte", "Service", "Contact"].map((t) => html`<span>${t}</span>`)}</nav>
        </header>
        <h2 class="script heading">Nous Contacter</h2>
        <main class="main">
          <div class="contacts">
            <div class="row name">${icon(icons.user)}<div class="value">Trattoria San Pietro</div></div>
            <div class="row address">${icon(icons.map)}<div class="value">Via S. Pietro, 95<br />35139 Padova PD,<br />Italie</div></div>
            <div class="row phone">${icon(icons.phone)}<div class="value">+39 04 98 76 03 30</div></div>
          </div>
          <div class="place"><city-map></city-map></div>
        </main>
        <footer class="footer"><p class="script credit">Designed by JdeDev 2021</p></footer>
      </div>
      <div class="scrollbar">
        <svg class="arrow"><path d="M4.5,10.5 L8.5,6.5 L12.5,10.5" /></svg>
        <div class="track"></div>
        <div class="thumb"></div>
        <svg class="arrow"><path d="M4.5,6.5 L8.5,10.5 L12.5,6.5" /></svg>
      </div>
    </div>`;
  }
}
